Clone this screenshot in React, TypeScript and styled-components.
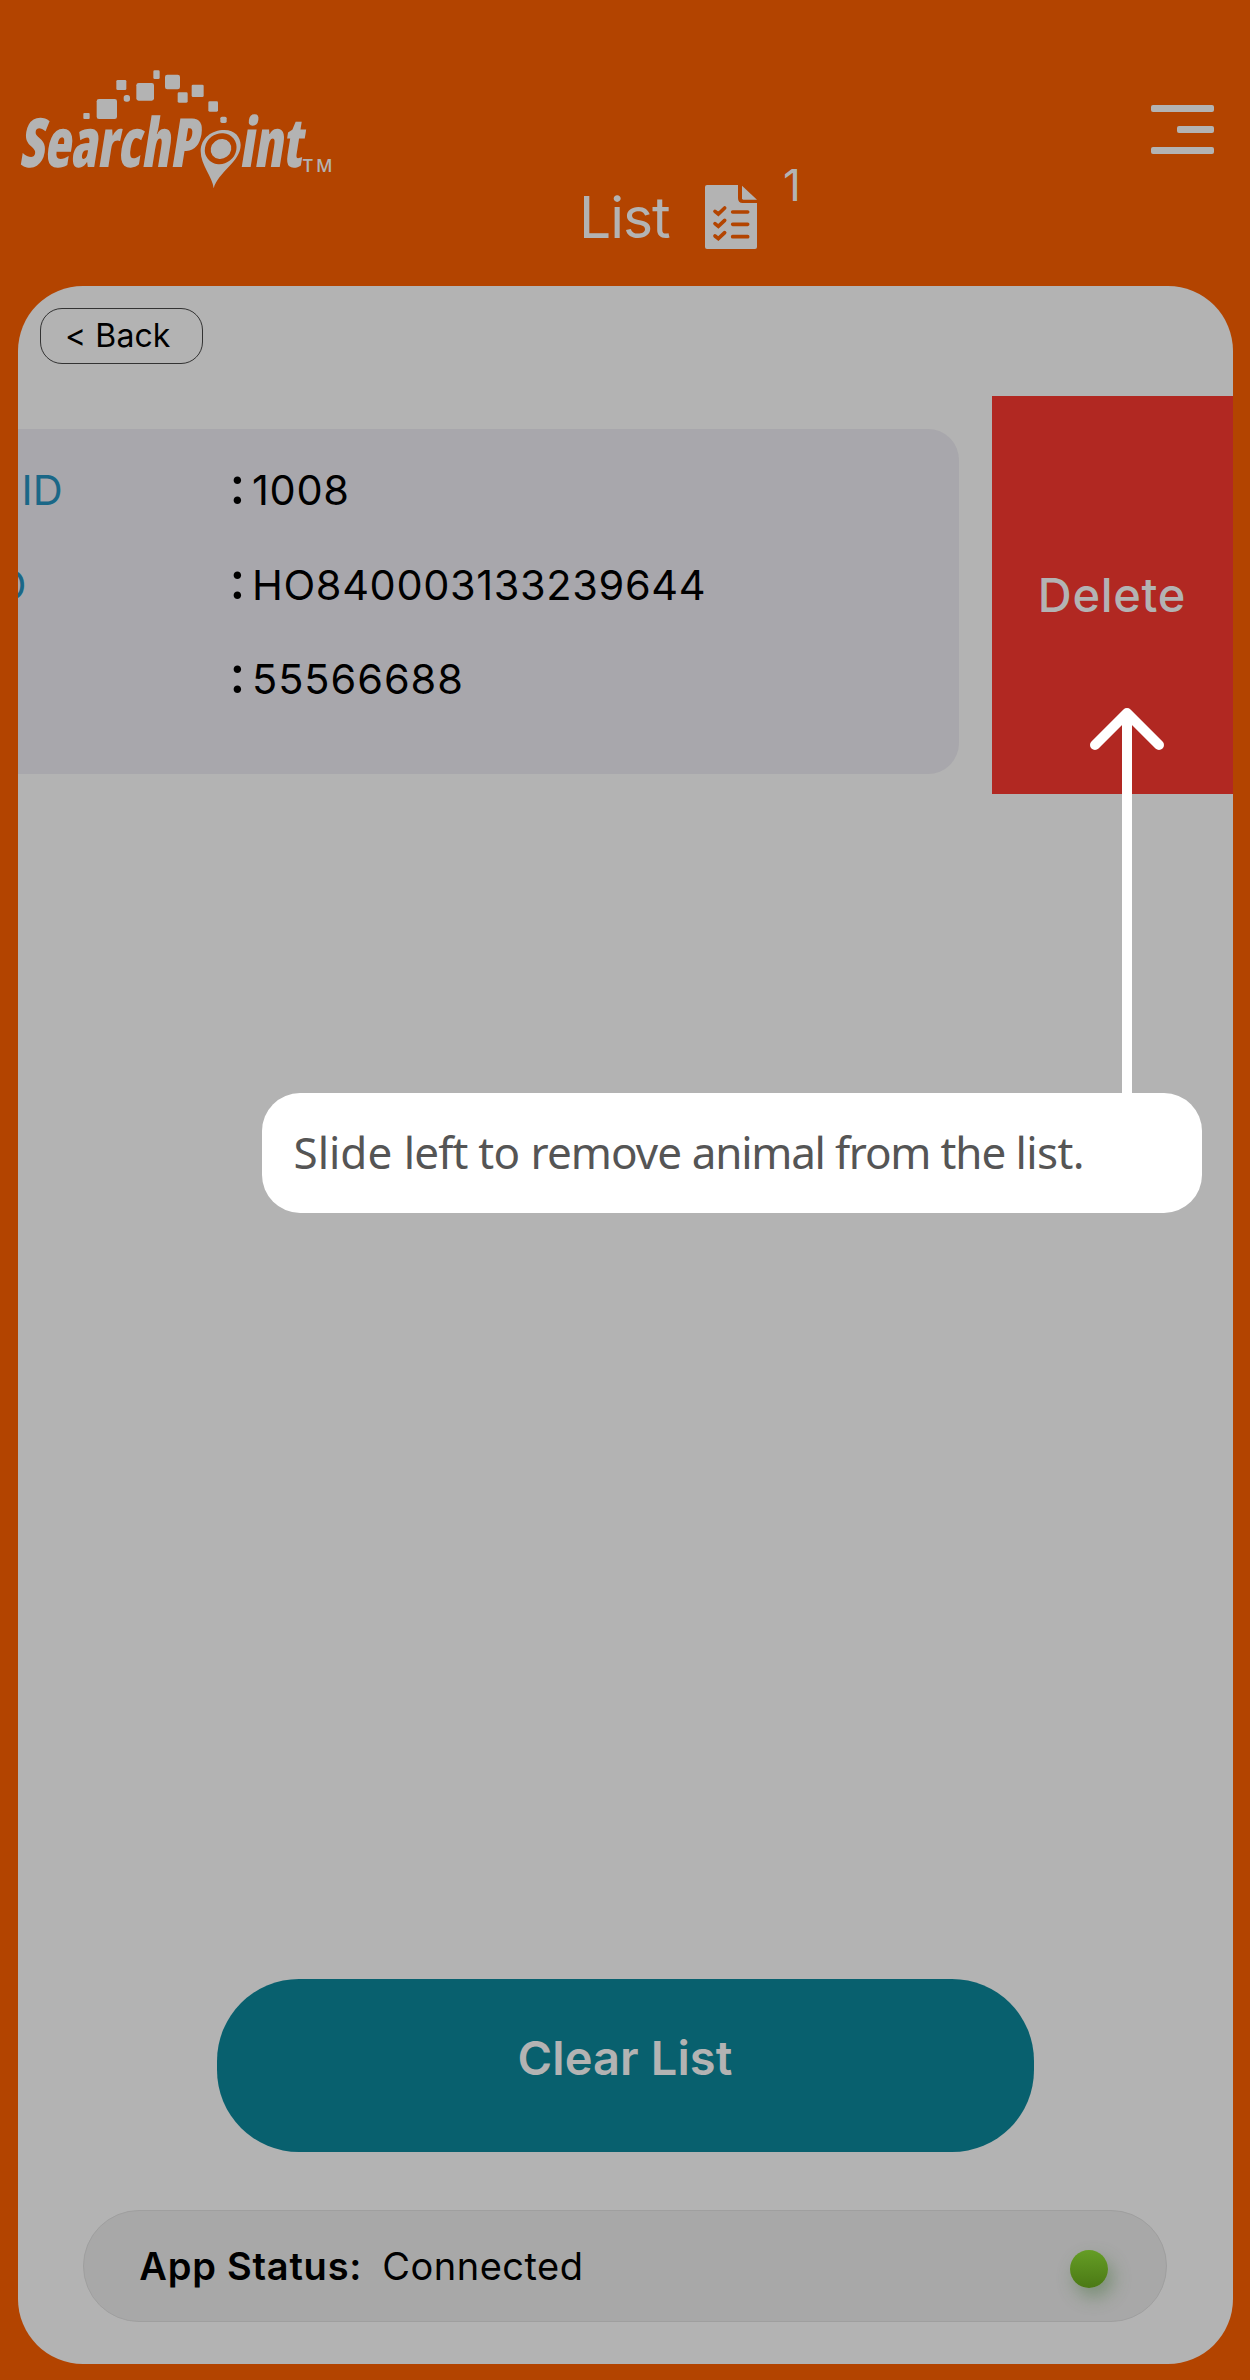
import React from 'react';
import styled, { createGlobalStyle } from 'styled-components';

const ink = '#b3b3b3';
const orange = '#b34400';

const GlobalStyle = createGlobalStyle`
  * { box-sizing: border-box; }
  body { margin: 0; background: ${orange}; }
`;

const Screen = styled.main`
  position: relative;
  width: 1250px;
  height: 2380px;
  display: flex;
  flex-direction: column;
  background: ${orange};
  font-family: Inter, "Liberation Sans", sans-serif;
  overflow: hidden;
`;

const Header = styled.header`
  flex: none;
  display: flex;
  align-items: flex-start;
  height: 285.5px;
  color: ${ink};
`;

const LogoMark = styled.svg`
  flex: none;
  width: 360px;
  height: 160px;
  margin-top: 50px;
`;

const LogoText = styled.g`
  font-family: "Open Sans", sans-serif;
  font-weight: 800;
  font-size: 204px;
  font-stretch: 75%;
`;

const LogoTrademark = styled.text`
  font-family: "Open Sans", sans-serif;
  font-weight: 600;
  font-size: 54px;
`;

const Title = styled.h1`
  display: flex;
  align-items: center;
  height: 96px;
  margin: 169px 0 0 219px;
  font-weight: 400;
`;

const TitleText = styled.span`
  width: 126px;
  padding-top: 1px;
  font-size: 57px;
  line-height: 60px;
  letter-spacing: -1px;
`;

const Count = styled.sup`
  align-self: flex-start;
  margin-left: 26px;
  font-size: 44px;
  font-weight: 400;
  line-height: 32px;
`;

const MenuButton = styled.button`
  display: flex;
  flex-direction: column;
  align-items: flex-end;
  gap: 14px;
  width: 63px;
  margin: 105px 36px 0 auto;
  padding: 0;
  border: 0;
  background: none;
`;

const MenuBar = styled.span<{ $short?: boolean }>`
  width: ${(p) => (p.$short ? 37 : 63)}px;
  height: 7px;
  border-radius: 2px;
  background: ${ink};
`;

const Panel = styled.section`
  flex: none;
  display: flex;
  flex-direction: column;
  width: 1215px;
  height: 2078px;
  margin-left: 17.5px;
  padding-bottom: 41.5px;
  border-radius: 65px;
  background: ${ink};
  overflow: hidden;
`;

const BackButton = styled.button`
  width: 163px;
  height: 56px;
  margin: 22.5px 0 0 22.5px;
  padding: 0 0 0 24px;
  border: 1.5px solid #333;
  border-radius: 22px;
  background: none;
  color: #000;
  font: 400 32px/54px Inter, sans-serif;
  letter-spacing: 0.1px;
  text-align: left;
`;

const SwipeRow = styled.div`
  display: flex;
  height: 397.5px;
  margin-top: 32px;
`;

const AnimalCard = styled.dl`
  flex: 1;
  height: 345px;
  margin: 33px 32.5px 0 -40px;
  padding: 14px 0 0 40px;
  border-radius: 31px;
  background: #a8a7ac;
`;

const Field = styled.div`
  display: grid;
  grid-template-columns: 212px 22.5px 1fr;
  height: 94.5px;
  font-size: 41.5px;
  line-height: 94px;
  color: #000;
`;

const Label = styled.dt<{ $shift: number }>`
  margin-left: ${(p) => p.$shift}px;
  color: #1a6787;
`;

const Colon = styled.span`
  font-size: 52px;
  font-weight: 500;
  line-height: 86px;
`;

const Value = styled.dd<{ $tracking: number }>`
  margin: 0;
  letter-spacing: ${(p) => p.$tracking}px;
`;

const DeleteButton = styled.button`
  width: 241px;
  padding: 0;
  border: 0;
  background: #b12822;
  color: ${ink};
  font: 500 47px/60px Inter, sans-serif;
  letter-spacing: 0.7px;
`;

const ClearButton = styled.button`
  width: 817px;
  height: 172.5px;
  margin: auto auto 58px;
  padding: 0 0 15px;
  border: 0;
  border-radius: 82px;
  background: #08606e;
  color: ${ink};
  font: 600 47px/60px Inter, sans-serif;
  letter-spacing: 0.1px;
`;

const StatusBar = styled.footer`
  display: flex;
  align-items: center;
  width: 1083.5px;
  height: 112.5px;
  margin: 0 auto;
  padding: 0 58px 0 55px;
  border: 1.5px solid #9f9f9f;
  border-radius: 57px;
  background: #a8a8a8;
  color: #000;
  font-size: 38px;
`;

const StatusLabel = styled.strong`
  width: 243px;
  font-weight: 600;
  letter-spacing: 0.77px;
`;

const StatusValue = styled.span`
  letter-spacing: 0.5px;
`;

const StatusDot = styled.span`
  width: 38px;
  height: 38px;
  margin: 7px 0 0 auto;
  border-radius: 50%;
  background: linear-gradient(#659d25, #4b7915);
  box-shadow: 5px 9px 18px rgba(60, 110, 50, 0.42);
`;

const Hint = styled.div`
  position: absolute;
  top: 1093px;
  left: 262px;
  width: 940px;
  height: 120px;
  padding-left: 31.5px;
  border-radius: 38px;
  background: #fff;
  color: #555;
  font: 400 44px/118px "Noto Sans", sans-serif;
  white-space: pre;
`;

const HintWord = styled.span<{ $tracking: number }>`
  letter-spacing: ${(p) => p.$tracking}px;
`;

const HintArrow = styled.svg`
  position: absolute;
  top: 700px;
  left: 1087px;
  width: 80px;
  height: 400px;
`;

const squares = [
  [250, 189, 19, 18, 3],
  [290, 147, 61, 60, 7],
  [349, 90, 30, 30, 4],
  [371, 135, 19, 20, 8],
  [409, 99, 53, 53, 7],
  [460, 61, 19, 26, 4],
  [495, 74, 45, 44, 7],
  [533, 127, 30, 31, 4],
  [575, 104, 36, 37, 4],
  [625, 154, 29, 31, 4],
  [661, 200, 19, 19, 5],
];

const Logo = () => (
  <LogoMark viewBox="0 0 1080 480" fill={ink} role="img" aria-label="SearchPoint">
    {squares.map(([x, y, w, h, r]) => (
      <rect key={x} x={x} y={y} width={w} height={h} rx={r} />
    ))}
    <LogoText>
      <text transform="translate(57 351) skewX(-9)" textLength="536" lengthAdjust="spacingAndGlyphs">
        SearchP
      </text>
      <text transform="translate(717 351) skewX(-9)" textLength="188" lengthAdjust="spacingAndGlyphs">
        int
      </text>
    </LogoText>
    <path d="M641 415C638 382 602 345 602 304C602 264 636 240 673 240C705 240 722 262 722 285C722 335 654 366 641 415Z" />
    <ellipse cx="662" cy="296" rx="49" ry="45" fill={orange} transform="rotate(-38 662 296)" />
    <ellipse cx="663" cy="297" rx="32" ry="29" transform="rotate(-38 663 297)" />
    <LogoTrademark x="908" y="366" textLength="90">
      TM
    </LogoTrademark>
  </LogoMark>
);

const ListIcon = () => (
  <svg width="52" height="64" viewBox="435 106 156 192" fill="none">
    <path
      fill={ink}
      d="M441 106H534V145Q534 160 548 160H591V292Q591 298 585 298H441Q435 298 435 292V112Q435 106 441 106Z"
    />
    <path fill={ink} d="M546 108L591 150H550Q546 150 546 146Z" />
    {[0, 37, 74].map((dy) => (
      <path
        key={dy}
        transform={`translate(0 ${dy})`}
        d="M465 185L475 193L494 175M518 187H563"
        stroke={orange}
        strokeWidth="11"
        strokeLinecap="round"
      />
    ))}
  </svg>
);

const fields = [
  { label: 'ID', shift: 4, value: '1008', tracking: 0.7 },
  { label: 'D', shift: -21, value: 'HO840003133239644', tracking: 0.63 },
  { label: '', shift: 0, value: '55566688', tracking: 0.95 },
];

const hintWords: [string, number][] = [
  ['Slide ', 0],
  ['left ', -0.8],
  ['to ', -0.6],
  ['remove ', -0.9],
  ['animal ', -1.25],
  ['from ', -1.2],
  ['the ', -1.1],
  ['list.', -0.6],
];

export default function App() {
  return (
    <Screen>
      <GlobalStyle />
      <Header>
        <Logo />
        <Title>
          <TitleText>List</TitleText>
          <ListIcon />
          <Count>1</Count>
        </Title>
        <MenuButton aria-label="Menu">
          <MenuBar />
          <MenuBar $short />
          <MenuBar />
        </MenuButton>
      </Header>
      <Panel>
        <BackButton>&lt; Back</BackButton>
        <SwipeRow>
          <AnimalCard>
            {fields.map((f) => (
              <Field key={f.value}>
                <Label $shift={f.shift}>{f.label}</Label>
                <Colon>:</Colon>
                <Value $tracking={f.tracking}>{f.value}</Value>
              </Field>
            ))}
          </AnimalCard>
          <DeleteButton>Delete</DeleteButton>
        </SwipeRow>
        <ClearButton>Clear List</ClearButton>
        <StatusBar>
          <StatusLabel>App Status:</StatusLabel>
          <StatusValue>Connected</StatusValue>
          <StatusDot />
        </StatusBar>
      </Panel>
      <HintArrow viewBox="0 0 80 400" fill="none" stroke="#fff" strokeWidth="10">
        <path d="M40 15V400" />
        <path d="M8 45L40 13L72 45" strokeLinecap="round" strokeLinejoin="round" />
      </HintArrow>
      <Hint>
        {hintWords.map(([word, tracking]) => (
          <HintWord key={word} $tracking={tracking}>
            {word}
          </HintWord>
        ))}
      </Hint>
    </Screen>
  );
}
